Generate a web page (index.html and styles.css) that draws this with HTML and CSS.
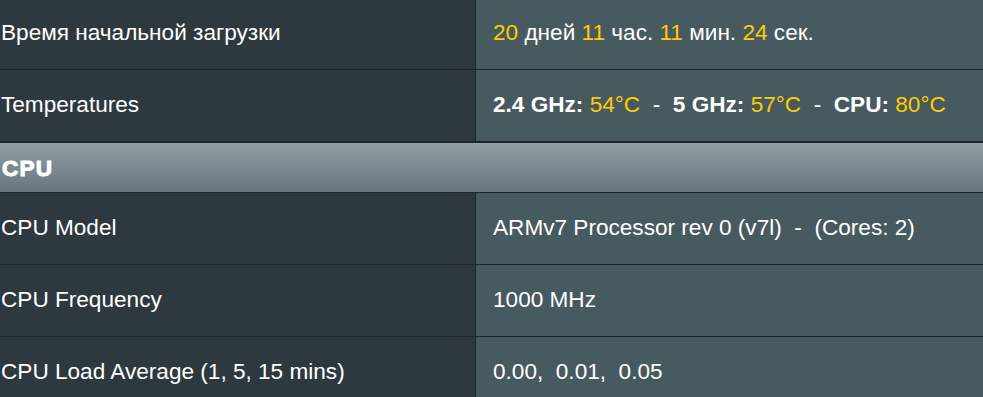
FILE: index.html
```html
<!DOCTYPE html>
<html lang="ru">
<head>
<meta charset="utf-8">
<title>System Information</title>
<link rel="stylesheet" href="styles.css">
</head>
<body>
<div class="info-table">
  <div class="row">
    <div class="label">Время начальной загрузки</div>
    <div class="value"><span class="hl">20</span> дней <span class="hl">11</span> час. <span class="hl">11</span> мин. <span class="hl">24</span> сек.</div>
  </div>
  <div class="row">
    <div class="label">Temperatures</div>
    <div class="value"><b>2.4 GHz:</b> <span class="hl">54°C</span>&nbsp;&nbsp;-&nbsp;&nbsp;<b>5 GHz:</b> <span class="hl">57°C</span>&nbsp;&nbsp;-&nbsp;&nbsp;<b>CPU:</b> <span class="hl">80°C</span></div>
  </div>
  <div class="section-head">CPU</div>
  <div class="row">
    <div class="label">CPU Model</div>
    <div class="value">ARMv7 Processor rev 0 (v7l)&nbsp;&nbsp;-&nbsp;&nbsp;(Cores: 2)</div>
  </div>
  <div class="row">
    <div class="label">CPU Frequency</div>
    <div class="value">1000 MHz</div>
  </div>
  <div class="row">
    <div class="label">CPU Load Average (1, 5, 15 mins)</div>
    <div class="value">0.00,&nbsp;&nbsp;0.01,&nbsp;&nbsp;0.05</div>
  </div>
</div>
</body>
</html>
```
FILE: styles.css
```css
html, body {
  margin: 0;
  padding: 0;
  background: #475a5f;
  overflow: hidden;
}

body {
  font-family: "Liberation Sans", Arial, sans-serif;
  font-size: 22.6px;
  line-height: 25px;
  color: #ffffff;
}

.info-table {
  margin-top: -2px;
  width: 983px;
}

.row {
  display: grid;
  grid-template-columns: 476px 1fr;
  border-bottom: 1px solid #1f2629;
}

.label {
  background: #2e393f;
  border-right: 1px solid #1f2629;
  padding: 22px 0 24px 1px;
  white-space: nowrap;
}

.value {
  background: #475a5f;
  padding: 22px 0 24px 17px;
  white-space: nowrap;
}

.value b {
  font-weight: bold;
}

.hl {
  color: #ffcc00;
}

.section-head {
  border-top: 1px solid #1f2629;
  border-bottom: 1px solid #1f2629;
  background: linear-gradient(to bottom, #92a0a5 0%, #66757c 100%);
  padding: 13px 0 11px 2px;
  font-weight: bold;
  letter-spacing: 1.2px;
  -webkit-text-stroke: 1px #ffffff;
  color: #ffffff;
}
```
